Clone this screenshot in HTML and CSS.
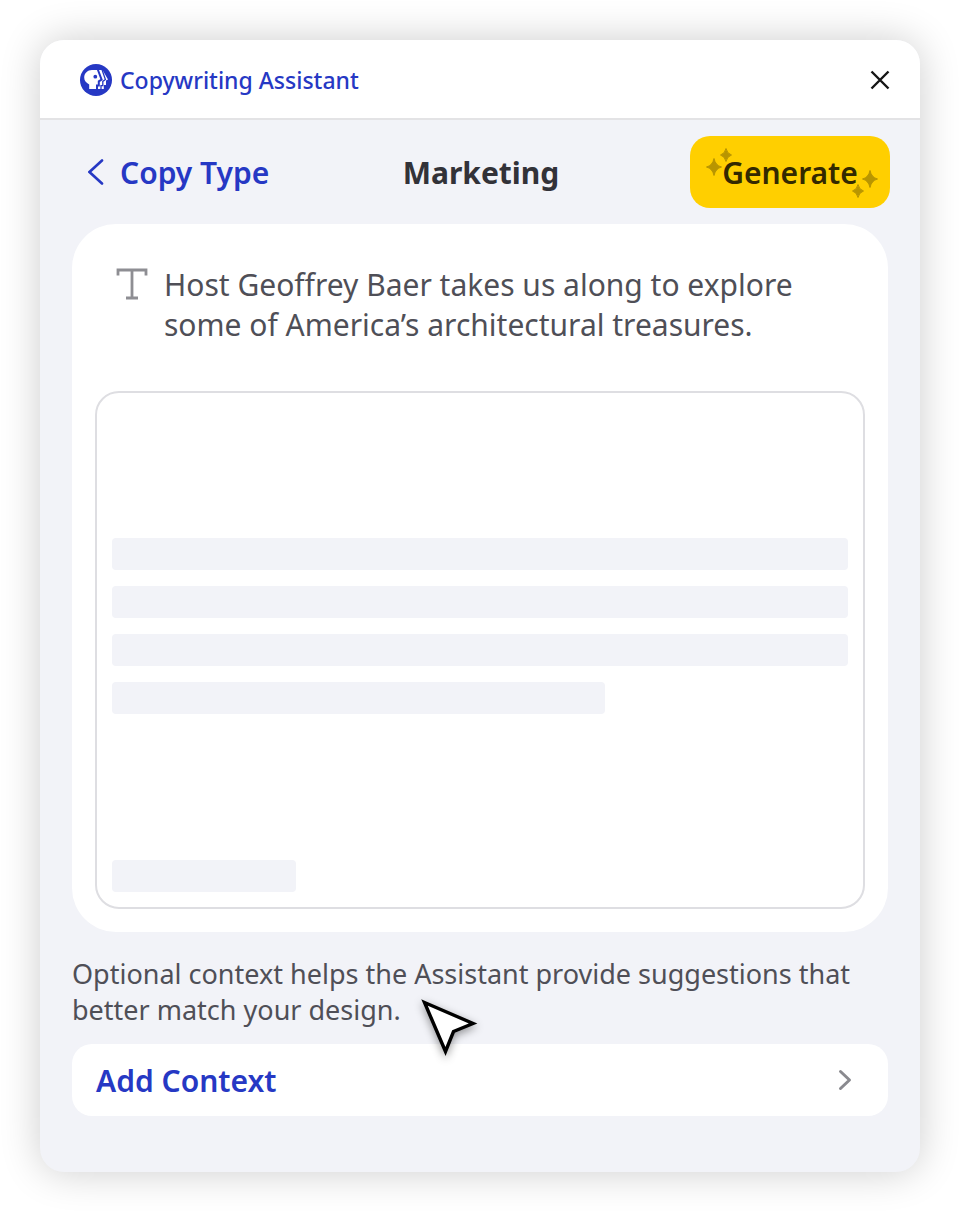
FILE: index.html
```html
<!DOCTYPE html>
<html lang="en">
<head>
    <meta charset="UTF-8">
    <title>Copywriting Assistant</title>
    <link rel="stylesheet" href="styles.css">
</head>
<body>
    <div class="panel">
        <header class="header">
            <svg class="logo" viewBox="0 0 32 32" width="32" height="32" aria-hidden="true">
                <circle cx="16" cy="16" r="16" fill="#2638c4"/>
                <path fill="#fff" d="M12 6H22.5L28 15.4L26 16.6V21H23.8V25H9.2V20.4C6 19 4.2 16.6 4.2 13.6C4.2 9.2 7.6 6 12 6Z"/>
                <path stroke="#2638c4" stroke-width="2" d="M17.6 5L21.6 15.6L18.8 17.4V21.6H17V25.5"/>
                <path stroke="#2638c4" stroke-width="1.3" d="M21.8 5L25.4 15.6L22.8 17.4V21.6H21V25.5"/>
                <circle cx="15.3" cy="12.7" r="1.9" fill="#2638c4"/>
            </svg>
            <span class="app-name">Copywriting Assistant</span>
            <button class="close" type="button" aria-label="Close">
                <svg viewBox="0 0 20 20" width="20" height="20"><path d="M1.5 1.5L18.5 18.5M18.5 1.5L1.5 18.5"/></svg>
            </button>
        </header>

        <nav class="toolbar">
            <a class="back" href="#">
                <svg viewBox="0 0 16 26" width="16" height="26"><path d="M14 1.5L1.5 13L14 24.5"/></svg>
                Copy Type
            </a>
            <h1 class="title">Marketing</h1>
            <button class="generate" type="button">
                Generate
                <svg class="sparkles" viewBox="0 0 200 72" aria-hidden="true">
                    <path d="M24 22.5Q25.5 29.5 31.5 31Q25.5 32.5 24 39.5Q22.5 32.5 16.5 31Q22.5 29.5 24 22.5Z"/>
                    <path d="M36 12.5Q37 17.5 41.5 19Q37 20.5 36 25.5Q35 20.5 30.5 19Q35 17.5 36 12.5Z"/>
                    <path d="M180 34.5Q181.5 41.5 187.5 43Q181.5 44.5 180 51.5Q178.5 44.5 172.5 43Q178.5 41.5 180 34.5Z"/>
                    <path d="M168 48.5Q169 53.5 173.5 55Q169 56.5 168 61.5Q167 56.5 162.5 55Q167 53.5 168 48.5Z"/>
                </svg>
            </button>
        </nav>

        <main class="content">
            <section class="card">
                <div class="source">
                    <svg class="type-icon" viewBox="0 0 32 32" width="32" height="32" aria-hidden="true"><path d="M2 7.5V2H30V7.5M16 2V30M10 30H22"/></svg>
                    <p>Host Geoffrey Baer takes us along to explore some of America’s architectural treasures.</p>
                </div>
                <div class="result">
                    <div class="lines">
                        <div class="bar"></div>
                        <div class="bar"></div>
                        <div class="bar"></div>
                        <div class="bar bar-short"></div>
                    </div>
                    <div class="bar bar-count"></div>
                </div>
            </section>

            <div class="hint">
                <p>Optional context helps the Assistant provide suggestions that better match your design.</p>
                <svg class="cursor" viewBox="0 0 64 64" width="64" height="64" aria-hidden="true"><path d="M8.5 9.5L57 30.5L37.5 38.5L29.5 58.5Z"/></svg>
            </div>

            <button class="context" type="button">
                Add Context
                <svg viewBox="0 0 14 22" width="14" height="22"><path d="M2.5 2.5L11.5 11L2.5 19.5"/></svg>
            </button>
        </main>
    </div>
</body>
</html>
```
FILE: styles.css
```css
* {
    box-sizing: border-box;
    margin: 0;
    padding: 0;
}
body {
    padding: 40px;
    background-color: #fff;
    font-family: "Noto Sans", sans-serif;
    color: #4f4f57;
}
button {
    border: 0;
    background: none;
    font-family: inherit;
    cursor: pointer;
}
svg {
    fill: none;
}
.panel {
    border-radius: 24px;
    background-color: #f2f3f8;
    box-shadow: 0 0 40px rgba(0, 0, 0, 0.2);
}

/* header */
.header {
    display: flex;
    align-items: center;
    gap: 8px;
    height: 80px;
    padding: 2px 30px 0 40px;
    border-bottom: 2px solid #e3e3e5;
    border-radius: 24px 24px 0 0;
    background-color: #fff;
}
.app-name {
    font-size: 23px;
    font-weight: 500;
    color: #2638c4;
}
.close {
    display: flex;
    margin-left: auto;
}
.close svg {
    stroke: #151515;
    stroke-width: 2.4;
}

/* toolbar */
.toolbar {
    display: grid;
    grid-template-columns: 1fr auto 1fr;
    align-items: center;
    padding: 16px 30px 16px 32px;
}
.back {
    display: flex;
    align-items: center;
    gap: 16px;
    padding-left: 16px;
    font-size: 30px;
    font-weight: 600;
    color: #2638c4;
    text-decoration: none;
}
.back svg {
    stroke: #2638c4;
    stroke-width: 2.6;
    stroke-linecap: round;
}
.title {
    font-size: 30px;
    font-weight: 700;
    color: #323238;
}
.generate {
    position: relative;
    justify-self: end;
    width: 200px;
    height: 72px;
    border-radius: 20px;
    background-color: #ffcf00;
    font-size: 30px;
    font-weight: 600;
    color: #332900;
}
.sparkles {
    position: absolute;
    inset: 0;
    fill: #b89500;
    stroke: #b89500;
    stroke-width: 1;
    stroke-linejoin: round;
}

/* content */
.content {
    padding: 0 32px 56px;
}
.card {
    padding: 41px 23px 23px;
    border-radius: 44px;
    background-color: #fff;
}
.source {
    display: flex;
    gap: 16px;
    padding: 0 21px;
    margin-bottom: 46px;
    font-size: 30px;
    line-height: 40px;
}
.type-icon {
    flex: none;
    margin-top: 3px;
    stroke: #8e8e93;
    stroke-width: 2.8;
}
.result {
    display: flex;
    flex-direction: column;
    height: 518px;
    padding: 145px 15px 15px;
    border: 2px solid #dedee2;
    border-radius: 24px;
}
.lines {
    display: grid;
    gap: 16px;
    margin-bottom: auto;
}
.bar {
    height: 32px;
    border-radius: 4px;
    background-color: #f2f3f8;
}
.bar-short {
    width: 67%;
}
.bar-count {
    width: 25%;
}

.hint {
    position: relative;
    padding: 24px 0 16px;
    font-size: 27px;
    line-height: 36px;
}
.cursor {
    position: absolute;
    left: 344px;
    bottom: -13px;
    fill: #fff;
    stroke: #000;
    stroke-width: 3.4;
    filter: drop-shadow(0 3px 4px rgba(0, 0, 0, 0.4));
}

.context {
    display: flex;
    align-items: center;
    justify-content: space-between;
    width: 100%;
    height: 72px;
    padding: 0 36px 0 24px;
    border-radius: 20px;
    background-color: #fff;
    font-size: 30px;
    font-weight: 600;
    color: #2638c4;
}
.context svg {
    stroke: #8a8a8f;
    stroke-width: 3;
    stroke-linecap: round;
    stroke-linejoin: round;
}
```
